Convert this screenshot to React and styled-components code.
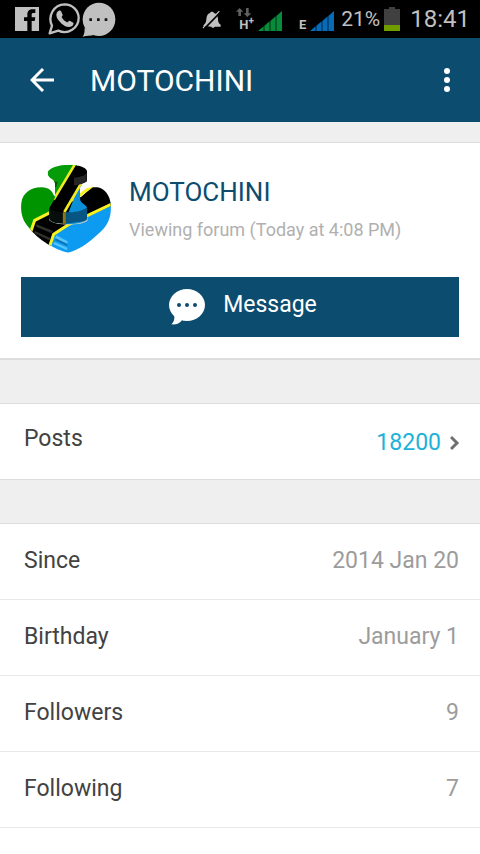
import styled, { createGlobalStyle } from "styled-components";

const details = [
    { label: "Since", value: "2014 Jan 20" },
    { label: "Birthday", value: "January 1" },
    { label: "Followers", value: "9" },
    { label: "Following", value: "7" },
];

const FacebookIcon = () => (
    <svg width="24" height="24" viewBox="0 0 72 72">
        <path fill="#c0c0c0" d="M0 0h72v72H0z" />
        <path fill="#000" d="M37 72V42H27V31h10v-8c0-11 6-16 16-16h8v11h-5c-5 0-6 2-6 6v7h11l-2 11h-9v30z" />
    </svg>
);

const WhatsappIcon = () => (
    <svg width="32" height="32" viewBox="0 0 96 96">
        <path
            fill="none"
            stroke="#c0c0c0"
            strokeWidth="7"
            strokeLinejoin="round"
            d="M5 91l7-23C-2 39 17 5 50 4c23 0 42 18 42 41 0 30-32 51-61 38z"
        />
        <path
            fill="#c0c0c0"
            d="M32 23c3-1 6-1 7 1l5 11c1 3-4 6-3 8 4 7 9 12 16 15 3 1 5-6 8-5l11 6c2 2-1 9-5 11-9 5-21 0-30-8S25 45 25 36c0-6 3-11 7-13z"
        />
    </svg>
);

const ChatIcon = () => (
    <svg width="34" height="35" viewBox="0 0 102 105">
        <ellipse cx="51" cy="52" rx="49" ry="50" fill="#c0c0c0" />
        <path d="M2 104c4-5 6-12 6-27l28 22C25 101 17 101 2 104z" fill="#c0c0c0" />
        <path d="M22 49h8v8h-8zM45 49h8v8h-8zM68 49h8v8h-8z" fill="#111" />
    </svg>
);

const MutedIcon = () => (
    <svg width="20" height="20" viewBox="0 0 60 60">
        <path
            fill="#c0c0c0"
            d="M3 50c7-5 9-9 10-19 1-12 4-17 11-19 2-5 10-5 12 0 9 2 11 8 12 18 0 9 2 13 8 17v6H38c-1 4-9 4-10 0z"
        />
        <path d="M3 57L52 7" stroke="#c0c0c0" strokeWidth="4" />
        <path d="M8 58L56 9" stroke="#000" strokeWidth="5" />
    </svg>
);

const DataArrows = () => (
    <svg width="16" height="11" viewBox="0 0 48 33">
        <path fill="#606060" d="M11 3l11 11h-7v13H7V14H0zM34 30L23 19h7V3h8v16h8z" />
    </svg>
);

const SignalIcon = ({ color }) => (
    <svg width="24" height="20" viewBox="0 0 72 60">
        <path fill={color} d="M0 60l17-14v14zM19 60V44l16-13v29zM37 60V30l16-14v44zM55 60V15L72 0v60z" />
    </svg>
);

const BatteryIcon = () => (
    <svg width="16" height="24" viewBox="0 0 48 72">
        <path fill="#404040" d="M0 6h15V0h18v6h15v66H0z" />
        <path fill="#719c00" d="M0 54h48v18H0z" />
    </svg>
);

const BackIcon = () => (
    <svg width="24" height="24" viewBox="0 0 24 24" fill="none" stroke="#fff" strokeWidth="3">
        <path d="M13 1L2 12l11 11M2 12h22" />
    </svg>
);

const MenuIcon = () => (
    <svg width="8" height="26" viewBox="0 0 8 26" fill="#fff">
        <circle cx="4" cy="4" r="3" />
        <circle cx="4" cy="13" r="3" />
        <circle cx="4" cy="22" r="3" />
    </svg>
);

const MessageIcon = () => (
    <svg width="36" height="36" viewBox="0 0 108 108">
        <ellipse cx="54" cy="48" rx="54" ry="48" fill="#fff" />
        <path d="M16 80c1 12-2 20-9 26 13 2 24-2 33-14z" fill="#fff" />
        <g fill="#0c4d6f">
            <circle cx="30" cy="48" r="6" />
            <circle cx="54" cy="48" r="6" />
            <circle cx="78" cy="48" r="6" />
        </g>
    </svg>
);

const ChevronIcon = () => (
    <svg width="10" height="16" viewBox="0 0 10 16" fill="none" stroke="#707070" strokeWidth="3">
        <path d="M1 2l6 6-6 6" />
    </svg>
);

const Avatar = () => (
    <svg width="90" height="90" viewBox="33 26 270 270" role="img" aria-label="MOTOCHINI">
        <defs>
            <clipPath id="base">
                <path d="M34 142C38 112 66 95 94 96c24 0 32 11 38 25l80-12c10-11 31-15 51-13 22 4 37 25 39 51 3 35-6 61-35 87-29 27-60 51-93 58-39-9-91-39-119-77-18-21-24-43-21-73z" />
            </clipPath>
            <clipPath id="top">
                <path d="M113 50c7-13 34-22 63-22 30 0 53 8 55 19v28c-1 11-20 12-21 24v30c0 17 22 18 22 33v28c-9 11-30 16-58 16-30 0-50-5-56-15v-36c0-16 17-15 17-32v-38c0-14-20-15-22-29z" />
            </clipPath>
        </defs>
        <g clipPath="url(#base)">
            <path fill="#009500" d="M30 90h150v90L60 240H30z" />
            <path fill="#0c9bf0" d="M110 300V225l200-90v165z" />
            <path fill="#000" d="M72 196l142-72 38-34h60v58l-134 60-44 28-14 40-60-40z" />
            <path fill="none" stroke="#f8f222" strokeWidth="9" d="M60 236l14-41 46-23 90-53 38-28M118 276l13-39 46-30 130-62" />
            <path fill="#30302a" d="M80 207l48 19-3 8-47-20zM75 227l46 21-3 7-46-22z" />
            <path fill="#55c5f8" d="M139 240l34 18-1 8-37-17zM134 260l38 17-1 8-41-19z" />
            <path fill="#0874b5" d="M137 249l35 17v6l-37-17z" />
        </g>
        <path d="M117 185c9 15 31 18 59 18 27 0 48-5 57-17v9c-7 10-31 13-57 13-28 0-50-5-59-14z" fill="#b8c7c6" />
        <g clipPath="url(#top)">
            <path fill="#069b08" d="M110 25h94l-78 130h-16z" />
            <path fill="#0c8fd9" d="M212 78l25 70v58h-75z" />
            <path fill="#000" d="M193 30h45v47l-26 8-48 86v32h-48v-42z" />
            <path d="M112 62c7 12 18 16 31 18l-5 16-15-6-13-8z" fill="#075409" />
            <path d="M117 160c14 9 36 11 50 10v35h-50z" fill="#080e0c" />
            <path d="M167 170c27 3 54-4 65-15v41l-65 9z" fill="#065582" />
            <path fill="none" stroke="#eeea20" strokeWidth="8" d="M196 25l-65 108M213 85l-50 85" />
            <path stroke="#887817" strokeWidth="9" d="M163 171v34" />
            <path d="M192 67c16-1 32-5 38-14v24c-7 8-23 12-38 13z" fill="#252525" />
        </g>
    </svg>
);

const App = () => (
    <>
        <GlobalStyle />
        <StatusBar>
            <Notifications>
                <FacebookIcon />
                <WhatsappIcon />
                <ChatIcon />
            </Notifications>
            <SystemStatus>
                <MutedIcon />
                <Network>
                    <NetworkType>
                        <DataArrows />
                        <NetworkName>H<sup>+</sup></NetworkName>
                    </NetworkType>
                    <SignalIcon color="#068c3b" />
                </Network>
                <Network>
                    <NetworkName>E</NetworkName>
                    <SignalIcon color="#066bb8" />
                </Network>
                <Battery>
                    <span>21%</span>
                    <BatteryIcon />
                </Battery>
                <Clock>18:41</Clock>
            </SystemStatus>
        </StatusBar>

        <Header>
            <IconButton type="button" aria-label="Back"><BackIcon /></IconButton>
            <Title>MOTOCHINI</Title>
            <IconButton type="button" aria-label="More options"><MenuIcon /></IconButton>
        </Header>

        <main>
            <Profile>
                <User>
                    <Avatar />
                    <UserInfo>
                        <Name>MOTOCHINI</Name>
                        <Activity>Viewing forum (Today at 4:08 PM)</Activity>
                    </UserInfo>
                </User>
                <MessageButton type="button">
                    <MessageIcon />
                    <MessageLabel>Message</MessageLabel>
                </MessageButton>
            </Profile>

            <PostsLink href="#posts">
                <PostsLabel>Posts</PostsLabel>
                <PostsCount>
                    18200
                    <ChevronIcon />
                </PostsCount>
            </PostsLink>

            <Details>
                {details.map(({ label, value }) => (
                    <Row key={label}>
                        <dt>{label}</dt>
                        <Value>{value}</Value>
                    </Row>
                ))}
            </Details>
        </main>
    </>
);

export default App;

const GlobalStyle = createGlobalStyle`
    * {
        box-sizing: border-box;
    }

    body {
        margin: 0;
        min-height: 100vh;
        background-color: #ffffff;
        color: #424242;
        font-family: Roboto, sans-serif;
        font-size: 23px;
    }

    svg {
        display: block;
        flex-shrink: 0;
    }

    h1, h2, p, dl, dd {
        margin: 0;
        font-weight: normal;
    }

    main {
        padding-top: 20px;
        background-color: #efefef;
    }
`

const StatusBar = styled.div`
    display: flex;
    justify-content: space-between;
    align-items: center;
    height: 38px;
    padding: 0 10px 0 15px;
    background-color: #000000;
    color: #c0c0c0;
`

const Notifications = styled.div`
    display: flex;
    align-items: center;
    gap: 9px;

    svg + svg + svg {
        margin-left: -7px;
    }
`

const SystemStatus = styled.div`
    display: flex;
    align-items: center;
    gap: 14px;
`

const Network = styled.div`
    display: flex;
    align-items: flex-end;
    gap: 4px;
    height: 24px;
`

const NetworkType = styled.div`
    display: flex;
    flex-direction: column;
`

const NetworkName = styled.span`
    padding-left: 3px;
    font-size: 13px;
    font-weight: bold;
    line-height: 13px;

    sup {
        font-size: 10px;
        line-height: 0;
    }
`

const Battery = styled.div`
    display: flex;
    align-items: center;
    gap: 4px;
    margin-left: -7px;
    font-size: 21px;
`

const Clock = styled.time`
    margin-left: -4px;
    font-size: 24px;
`

const Header = styled.header`
    display: flex;
    align-items: center;
    height: 84px;
    padding: 0 21px 0 22px;
    background-color: #0c4d6f;
    color: #ffffff;
`

const IconButton = styled.button`
    display: grid;
    place-items: center;
    min-width: 24px;
    height: 48px;
    padding: 0 8px;
    border: none;
    background: none;
`

const Title = styled.h1`
    flex: 1;
    padding-left: 28px;
    font-size: 30px;
`

const Profile = styled.section`
    padding: 21px;
    border-top: 1px solid #dcdcdc;
    border-bottom: 2px solid #dcdcdc;
    background-color: #ffffff;
`

const User = styled.div`
    display: flex;
    align-items: center;
    gap: 18px;
    margin-bottom: 23px;
`

const UserInfo = styled.div`
    padding-top: 4px;
`

const Name = styled.h2`
    color: #0c4d6f;
    font-size: 26px;
    line-height: 38px;
`

const Activity = styled.p`
    color: #b0b0b0;
    font-size: 18px;
    line-height: 38px;
`

const MessageButton = styled.button`
    display: flex;
    justify-content: center;
    align-items: center;
    gap: 18px;
    width: 100%;
    height: 60px;
    padding: 0 0 0 6px;
    border: none;
    background-color: #0c4d6f;
    color: #ffffff;
    font: inherit;
`

const MessageLabel = styled.span`
    padding-bottom: 6px;
`

const PostsLink = styled.a`
    display: flex;
    justify-content: space-between;
    align-items: center;
    height: 77px;
    margin: 43px 0;
    padding: 2px 20px 0 24px;
    border: solid #dcdcdc;
    border-width: 1px 0;
    background-color: #ffffff;
    color: inherit;
    text-decoration: none;
`

const PostsLabel = styled.span`
    padding-bottom: 8px;
`

const PostsCount = styled.span`
    display: flex;
    align-items: center;
    gap: 9px;
    color: #20b2d8;
`

const Details = styled.dl`
    border-top: 1px solid #dcdcdc;
    background-color: #ffffff;
`

const Row = styled.div`
    display: flex;
    justify-content: space-between;
    align-items: center;
    height: 76px;
    padding: 0 21px 2px 24px;
    border-bottom: 1px solid #e8e8e8;
`

const Value = styled.dd`
    color: #9c9c9c;
`
